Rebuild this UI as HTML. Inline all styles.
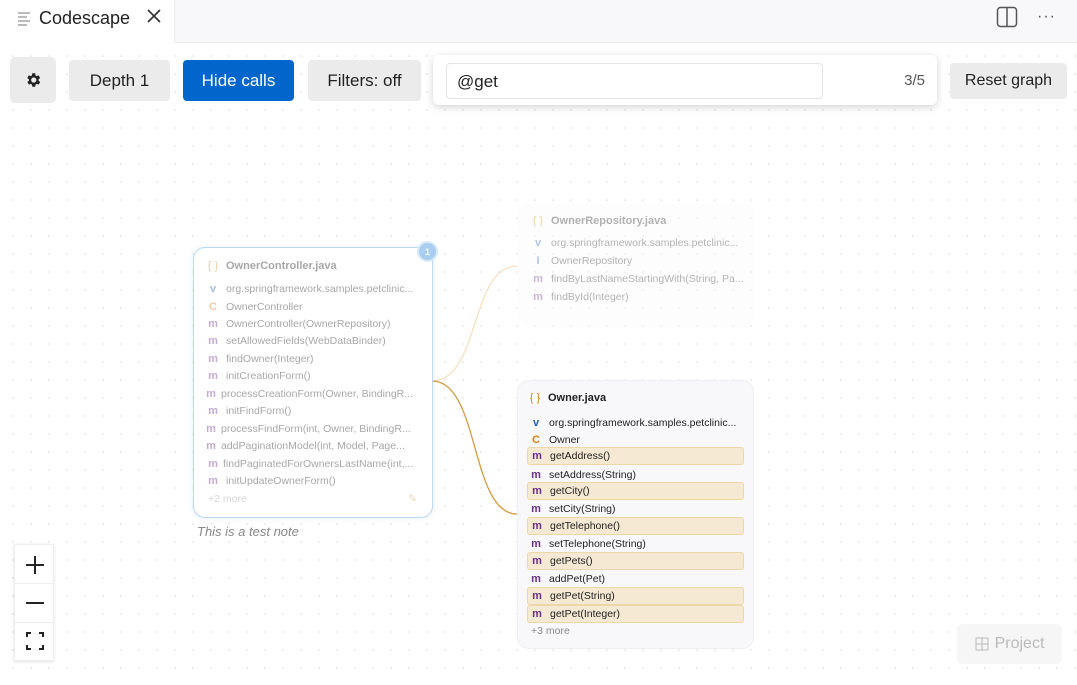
<!DOCTYPE html>
<html><head><meta charset="utf-8"><style>
*{box-sizing:border-box;margin:0;padding:0}
body{width:1077px;height:685px;overflow:hidden;font-family:"Liberation Sans",sans-serif;background:#fff;position:relative;color:#222}
.abs{position:absolute}
#tabbar{left:0;top:0;width:1077px;height:43px;background:#f8f8fa;border-bottom:1px solid #ececec}
#tab{left:0;top:0;width:175px;height:43px;background:#fff;border-right:1px solid #ececec}
#canvas{left:0;top:43px;width:1077px;height:642px;background-color:#fff;background-image:radial-gradient(#ececec 1px,transparent 1.2px);background-size:18px 18px;background-position:4px 4px}
.btn{position:absolute;background:#ebebeb;border-radius:4px;font-size:17px;color:#222;display:flex;align-items:center;justify-content:center}
.card{position:absolute;border-radius:12px}
.row{position:absolute;left:0;height:18px;font-size:10.5px;display:flex;align-items:center;white-space:nowrap}
.ic{display:inline-block;width:14px;text-align:center;font-weight:bold;margin-right:6px;font-size:11px}
.m{color:#6a2f8f}.v{color:#1a5fb4}.c{color:#d9800f}
.hl{background:#f5e9d3;border:1px solid #ecd7a8;border-radius:3px}
</style></head><body>
<div id="tabbar" class="abs"></div>
<div id="tab" class="abs">
 <div class="abs" style="left:18px;top:12px;width:12px">
  <div style="height:1.5px;background:#bbb;margin-bottom:2.5px;width:12px"></div>
  <div style="height:1.5px;background:#bbb;margin-bottom:2.5px;width:9px"></div>
  <div style="height:1.5px;background:#bbb;margin-bottom:2.5px;width:12px"></div>
  <div style="height:1.5px;background:#bbb;width:9px"></div>
 </div>
 <div class="abs" style="left:39px;top:8px;font-size:18px;color:#222">Codescape</div>
 <svg class="abs" style="left:146px;top:8px" width="16" height="16"><path d="M2 2L14 14M14 2L2 14" stroke="#333" stroke-width="1.6"/></svg>
</div>
<svg class="abs" style="left:996px;top:6px" width="22" height="22"><rect x="1.5" y="1.5" width="19" height="19" rx="3" fill="none" stroke="#555" stroke-width="1.5"/><path d="M11 2V20" stroke="#555" stroke-width="1.5"/></svg>
<div class="abs" style="left:1037px;top:8px;font-size:16px;color:#555;letter-spacing:1px">···</div>
<div id="canvas" class="abs"></div>

<div class="btn" style="left:10px;top:57px;width:46px;height:46px;border-radius:5px">
<svg width="18" height="18" viewBox="0 0 24 24"><path fill="#222" d="M19.4 13a7.5 7.5 0 0 0 0-2l2.1-1.6-2-3.5-2.5 1a7.4 7.4 0 0 0-1.7-1L15 3h-4l-.4 2.9a7.4 7.4 0 0 0-1.7 1l-2.5-1-2 3.5L6.6 11a7.5 7.5 0 0 0 0 2l-2.1 1.6 2 3.5 2.5-1a7.4 7.4 0 0 0 1.7 1L11 21h4l.4-2.9a7.4 7.4 0 0 0 1.7-1l2.5 1 2-3.5zM13 15.5a3.5 3.5 0 1 1 0-7 3.5 3.5 0 0 1 0 7z"/></svg></div>
<div class="btn" style="left:69px;top:60px;width:101px;height:41px">Depth 1</div>
<div class="btn" style="left:183px;top:60px;width:111px;height:41px;background:#0066cc;color:#fff">Hide calls</div>
<div class="btn" style="left:308px;top:60px;width:113px;height:41px">Filters: off</div>
<div class="abs" style="left:433px;top:55px;width:504px;height:50px;background:#fff;border-radius:6px;box-shadow:0 2px 8px rgba(0,0,0,.18)">
 <div class="abs" style="left:13px;top:8px;width:377px;height:36px;border:1px solid #e4e4e4;border-radius:4px;font-size:17px;padding:8px 10px">@get</div>
 <div class="abs" style="right:12px;top:17px;font-size:15px;color:#555">3/5</div>
</div>
<div class="btn" style="left:950px;top:63px;width:117px;height:36px;font-size:16px">Reset graph</div>

<svg class="abs" style="left:0;top:0" width="1077" height="685">
<path d="M432 381C480 381 470 266 517 266" fill="none" stroke="#f5dfbd" stroke-width="1.2"/>
<path d="M432 381C480 381 470 514 517 514" fill="none" stroke="#d69a45" stroke-width="1.3"/>
</svg>

<div class="card" style="left:517px;top:203px;width:237px;height:125px;background:#fcfcfd;opacity:.35">
 <div class="row" style="left:14px;top:9px;font-weight:bold;font-size:11px"><span class="ic c" style="font-weight:normal">{ }</span>OwnerRepository.java</div>
 <div class="row" style="left:14px;top:31px"><span class="ic v">v</span>org.springframework.samples.petclinic...</div>
 <div class="row" style="left:14px;top:49px"><span class="ic v">I</span>OwnerRepository</div>
 <div class="row" style="left:14px;top:67px"><span class="ic m">m</span>findByLastNameStartingWith(String, Pa...</div>
 <div class="row" style="left:14px;top:85px"><span class="ic m">m</span>findById(Integer)</div>
</div>

<div class="card" style="left:193px;top:247px;width:240px;height:271px;border:1.5px solid #bcd8f2;background:#fff;box-shadow:0 0 6px rgba(160,200,240,.3)">
 <div style="opacity:.4;position:absolute;inset:0">
 <div class="row" style="left:12px;top:9px;font-weight:bold;font-size:11px"><span class="ic c" style="font-weight:normal">{ }</span>OwnerController.java</div>
 <div class="row" style="left:12px;top:32px"><span class="ic v">v</span>org.springframework.samples.petclinic...</div>
 <div class="row" style="left:12px;top:50px"><span class="ic c">C</span>OwnerController</div>
 <div class="row" style="left:12px;top:67px"><span class="ic m">m</span>OwnerController(OwnerRepository)</div>
 <div class="row" style="left:12px;top:84px"><span class="ic m">m</span>setAllowedFields(WebDataBinder)</div>
 <div class="row" style="left:12px;top:102px"><span class="ic m">m</span>findOwner(Integer)</div>
 <div class="row" style="left:12px;top:119px"><span class="ic m">m</span>initCreationForm()</div>
 <div class="row" style="left:10px;top:137px"><span class="ic m" style="margin-right:3px">m</span>processCreationForm(Owner, BindingR...</div>
 <div class="row" style="left:12px;top:154px"><span class="ic m">m</span>initFindForm()</div>
 <div class="row" style="left:10px;top:172px"><span class="ic m" style="margin-right:3px">m</span>processFindForm(int, Owner, BindingR...</div>
 <div class="row" style="left:10px;top:189px"><span class="ic m" style="margin-right:3px">m</span>addPaginationModel(int, Model, Page...</div>
 <div class="row" style="left:12px;top:207px"><span class="ic m" style="margin-right:3px">m</span>findPaginatedForOwnersLastName(int,...</div>
 <div class="row" style="left:12px;top:224px"><span class="ic m">m</span>initUpdateOwnerForm()</div>
 <div class="row" style="left:14px;top:242px;color:#999">+2 more</div>
 <div class="abs" style="left:214px;top:244px;color:#d9a050;font-size:11px">✎</div>
 </div>
</div>
<div class="abs" style="left:417px;top:241px;width:21px;height:21px;border-radius:50%;background:#a9cdef;border:2px solid #d8e9f8;color:#fff;font-size:9px;font-weight:bold;display:flex;align-items:center;justify-content:center">1</div>
<div class="abs" style="left:197px;top:524px;font-size:13px;font-style:italic;color:#888">This is a test note</div>

<div class="card" style="left:517px;top:380px;width:237px;height:269px;background:#f8f8fa;border:1px solid #eeeef2">
 <div class="row" style="left:10px;top:8px;font-weight:bold;font-size:11px"><span class="ic c" style="font-weight:normal;background:#fff;border-radius:2px">{ }</span>Owner.java</div>
 <div class="row" style="left:11px;top:33px"><span class="ic v">v</span>org.springframework.samples.petclinic...</div>
 <div class="row" style="left:11px;top:50px"><span class="ic c">C</span>Owner</div>
 <div class="row hl" style="left:9px;top:66px;width:217px;padding-left:2px"><span class="ic m">m</span>getAddress()</div>
 <div class="row" style="left:11px;top:85px"><span class="ic m">m</span>setAddress(String)</div>
 <div class="row hl" style="left:9px;top:101px;width:217px;padding-left:2px"><span class="ic m">m</span>getCity()</div>
 <div class="row" style="left:11px;top:119px"><span class="ic m">m</span>setCity(String)</div>
 <div class="row hl" style="left:9px;top:136px;width:217px;padding-left:2px"><span class="ic m">m</span>getTelephone()</div>
 <div class="row" style="left:11px;top:154px"><span class="ic m">m</span>setTelephone(String)</div>
 <div class="row hl" style="left:9px;top:171px;width:217px;padding-left:2px"><span class="ic m">m</span>getPets()</div>
 <div class="row" style="left:11px;top:189px"><span class="ic m">m</span>addPet(Pet)</div>
 <div class="row hl" style="left:9px;top:206px;width:217px;padding-left:2px"><span class="ic m">m</span>getPet(String)</div>
 <div class="row hl" style="left:9px;top:224px;width:217px;padding-left:2px"><span class="ic m">m</span>getPet(Integer)</div>
 <div class="row" style="left:13px;top:241px;color:#888">+3 more</div>
</div>

<div class="abs" style="left:14px;top:544px;width:40px;height:117px;background:#fff;border:1px solid #eee;box-shadow:0 1px 3px rgba(0,0,0,.12)">
 <svg class="abs" style="left:10px;top:10px" width="20" height="20"><path d="M10 1V19M1 10H19" stroke="#222" stroke-width="2"/></svg>
 <div class="abs" style="left:0;top:38px;width:38px;height:1px;background:#eee"></div>
 <svg class="abs" style="left:10px;top:48px" width="20" height="20"><path d="M1 10H19" stroke="#222" stroke-width="2"/></svg>
 <div class="abs" style="left:0;top:77px;width:38px;height:1px;background:#eee"></div>
 <svg class="abs" style="left:11px;top:87px" width="18" height="18"><path d="M1 5V1H5M13 1H17V5M17 13V17H13M5 17H1V13" fill="none" stroke="#222" stroke-width="2"/></svg>
</div>

<div class="abs" style="left:957px;top:624px;width:105px;height:40px;background:#f6f6f6;border-radius:6px;color:#bbb;font-size:16px;display:flex;align-items:center;justify-content:center;gap:6px">
 <svg width="14" height="14"><rect x="1" y="1" width="12" height="12" fill="none" stroke="#bbb"/><path d="M7 1V13M1 7H13" stroke="#bbb"/></svg>Project</div>
</body></html>
